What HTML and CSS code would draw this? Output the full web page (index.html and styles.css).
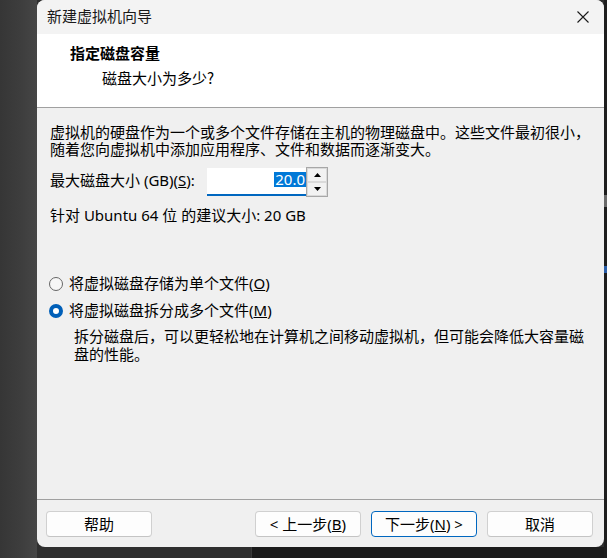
FILE: index.html
```html
<!DOCTYPE html>
<html lang="zh-CN">
<head>
<meta charset="utf-8">
<title>新建虚拟机向导</title>
<link rel="stylesheet" href="styles.css">
</head>
<body>
<div class="screen">
  <div class="left-bg"></div>
  <div class="main">
    <div class="dialog">
      <div class="titlebar">
        <span class="title">新建虚拟机向导</span>
        <svg class="close" width="12" height="12" viewBox="0 0 12 12"><path d="M0.5 0.5 L11.5 11.5 M11.5 0.5 L0.5 11.5" stroke="#1a1a1a" stroke-width="1.1" fill="none"/></svg>
      </div>
      <div class="header">
        <div class="h-title">指定磁盘容量</div>
        <div class="h-sub">磁盘大小为多少?</div>
      </div>
      <div class="content">
        <div class="para">
          <div class="line">虚拟机的硬盘作为一个或多个文件存储在主机的物理磁盘中。这些文件最初很小，</div>
          <div class="line">随着您向虚拟机中添加应用程序、文件和数据而逐渐变大。</div>
        </div>
        <div class="size-row">
          <span class="label">最大磁盘大小 (GB)(<u>S</u>):</span>
          <div class="input"><span class="sel">20.0</span></div>
          <div class="spin">
            <div class="spin-btn"><svg width="7" height="4" viewBox="0 0 7 4"><path d="M3.5 0 L7 4 L0 4 Z" fill="#000"/></svg></div>
            <div class="spin-btn"><svg width="7" height="4" viewBox="0 0 7 4"><path d="M0 0 L7 0 L3.5 4 Z" fill="#000"/></svg></div>
          </div>
        </div>
        <div class="rec">针对 Ubuntu 64 位 的建议大小: 20 GB</div>
        <div class="radio-row r1"><span class="radio"></span><span>将虚拟磁盘存储为单个文件(<u>O</u>)</span></div>
        <div class="radio-row r2"><span class="radio checked"></span><span>将虚拟磁盘拆分成多个文件(<u>M</u>)</span></div>
        <div class="desc">
          <div class="dline">拆分磁盘后，可以更轻松地在计算机之间移动虚拟机，但可能会降低大容量磁</div>
          <div class="dline">盘的性能。</div>
        </div>
      </div>
      <div class="footer">
        <button class="btn">帮助</button>
        <div class="nav">
          <button class="btn">&lt; 上一步(<u>B</u>)</button>
          <button class="btn default">下一步(<u>N</u>) &gt;</button>
          <button class="btn">取消</button>
        </div>
      </div>
    </div>
    <div class="bottom">
      <div class="bottom-a"></div>
      <div class="bottom-b"></div>
    </div>
  </div>
  <div class="right-bg">
    <div class="gap1"></div>
    <div class="mark-gray"></div>
    <div class="gap2"></div>
    <div class="mark-blue"></div>
  </div>
</div>
</body>
</html>
```
FILE: styles.css
```css
* { box-sizing: border-box; }
html, body { margin: 0; padding: 0; }
body {
  width: 607px;
  height: 558px;
  overflow: hidden;
  background: #303030;
  font-family: "Noto Sans", "Noto Sans CJK SC", sans-serif;
  font-size: 15px;
  color: #000;
}
.screen { display: flex; height: 558px; }
.left-bg {
  width: 37px;
  background: linear-gradient(to right, #363636, #3e3e3e 60%, #464646);
}
.main { width: 567px; display: flex; flex-direction: column; background: #2f2f2f; }
.dialog {
  height: 547px;
  display: flex;
  flex-direction: column;
  background: #f0f0f0;
  border-radius: 8px;
  overflow: hidden;
}
.titlebar {
  height: 34px;
  flex: none;
  background: #f3f3f3;
  display: flex;
  align-items: center;
  justify-content: space-between;
  padding: 0 15px 2px 10px;
}
.title { font-family: "Noto Sans CJK SC", sans-serif; font-size: 15px; line-height: 20px; color: #1a1a1a; }
.close { display: block; margin-top: 2px; }
.header {
  height: 74px;
  flex: none;
  background: #fff;
  border-bottom: 1px solid #a0a0a0;
  padding: 10px 0 0 33px;
  font-family: "Noto Sans CJK SC", sans-serif;
}
.h-title { font-weight: 700; line-height: 18px; }
.h-sub { margin-top: 7px; margin-left: 32px; line-height: 18px; }
.content {
  flex: 1;
  padding: 16px 0 0 13px;
  display: flex;
  flex-direction: column;
}
.para { margin: 0; }
.line {
  height: 17px;
  line-height: 17px;
  white-space: nowrap;
  font-family: "Liberation Sans", "Noto Sans CJK SC", sans-serif;
}
.size-row { margin-top: 9px; height: 30px; display: flex; align-items: center; }
.label { width: 157px; flex: none; line-height: 17px; margin-top: -3px; }
.input {
  width: 99px;
  height: 28px;
  background: #fff;
  border-bottom: 2px solid #0067c0;
  display: flex;
  align-items: center;
  justify-content: flex-end;
}
.sel {
  background: #0078d7;
  color: #fff;
  line-height: 15px;
  height: 15px;
  padding: 0 1px;
  margin-top: -3px;
}
.spin {
  width: 22px;
  height: 30px;
  border: 1px solid #a7a7a7;
  display: flex;
  flex-direction: column;
}
.spin-btn {
  flex: 1;
  display: flex;
  align-items: center;
  justify-content: center;
  background: #f2f2f2;
  border: 1px solid #dadada;
}
.spin-btn svg { display: block; }
.rec { margin-top: 10px; line-height: 17px; }
.radio-row { display: flex; align-items: center; line-height: 17px; margin-left: -1px; }
.r1 { margin-top: 51px; }
.r2 { margin-top: 10px; }
.radio {
  width: 14px;
  height: 14px;
  border-radius: 50%;
  border: 1px solid #666;
  background: #f7f7f7;
  margin-right: 6px;
  flex: none;
}
.radio.checked {
  border: 4.5px solid #005fb8;
  background: #fff;
}
.desc { margin: 9px 0 0 24px; }
.dline {
  height: 18px;
  line-height: 18px;
  white-space: nowrap;
  font-family: "Liberation Sans", "Noto Sans CJK SC", sans-serif;
}
.footer {
  flex: none;
  height: 48px;
  border-top: 1px solid #a0a0a0;
  display: flex;
  justify-content: space-between;
  padding: 11px 11px 10px 9px;
}
.nav { display: flex; gap: 10px; }
.btn {
  width: 106px;
  height: 26px;
  border: 1px solid #d0d0d0;
  border-bottom-color: #c4c4c4;
  border-radius: 4px;
  background: #fdfdfd;
  font-family: "Noto Sans", "Noto Sans CJK SC", sans-serif;
  font-size: 15px;
  color: #000;
  padding: 0;
  line-height: 22px;
}
.btn.default { border: 1px solid #0067c0; }
.bottom { flex: 1; display: flex; }
.bottom-a { width: 215px; background: #2f2f2f; border-right: 1px solid #3a3a3a; }
.bottom-b { flex: 1; background: #1b1b1b; }
.right-bg { flex: 1; background: #1e1e1e; display: flex; flex-direction: column; }
.gap1 { height: 195px; }
.mark-gray { height: 12px; background: #6a6a6a; }
.gap2 { height: 59px; }
.mark-blue { height: 7px; background: #2a5ea8; }
```
